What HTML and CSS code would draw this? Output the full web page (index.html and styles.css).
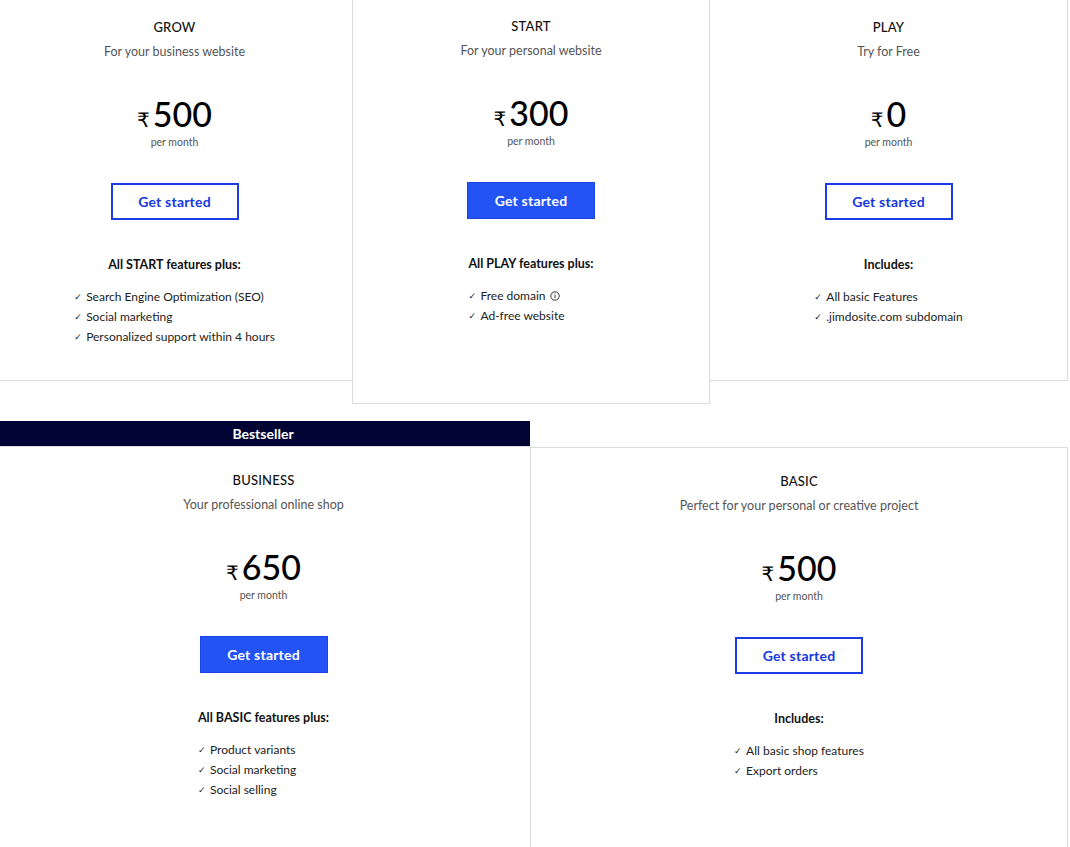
FILE: index.html
```html
<!DOCTYPE html>
<html lang="en">
<head>
<meta charset="utf-8">
<title>Plans</title>
<link rel="stylesheet" href="styles.css">
</head>
<body>
<div class="page">
  <div class="row row-top">
    <section class="card card-grow">
      <h2 class="plan">GROW</h2>
      <p class="tagline">For your business website</p>
      <div class="price"><span class="cur">₹</span><span class="amt">500</span></div>
      <p class="period">per month</p>
      <a class="btn btn-outline" href="#">Get started</a>
      <div class="features">
        <h3 class="feat-head">All START features plus:</h3>
        <ul class="feats">
          <li><span class="tick">✓</span>Search Engine Optimization (SEO)</li>
          <li><span class="tick">✓</span>Social marketing</li>
          <li><span class="tick">✓</span>Personalized support within 4 hours</li>
        </ul>
      </div>
    </section>
    <section class="card card-featured">
      <h2 class="plan">START</h2>
      <p class="tagline">For your personal website</p>
      <div class="price"><span class="cur">₹</span><span class="amt">300</span></div>
      <p class="period">per month</p>
      <a class="btn btn-solid" href="#">Get started</a>
      <div class="features">
        <h3 class="feat-head">All PLAY features plus:</h3>
        <ul class="feats">
          <li><span class="tick">✓</span>Free domain <svg class="info" viewBox="0 0 10 10" width="10" height="10"><circle cx="5" cy="5" r="4.2" fill="none" stroke="#222" stroke-width="0.9"/><rect x="4.55" y="4.2" width="0.9" height="3" fill="#222"/><rect x="4.55" y="2.6" width="0.9" height="0.9" fill="#222"/></svg></li>
          <li><span class="tick">✓</span>Ad-free website</li>
        </ul>
      </div>
    </section>
    <section class="card card-play">
      <h2 class="plan">PLAY</h2>
      <p class="tagline">Try for Free</p>
      <div class="price"><span class="cur">₹</span><span class="amt">0</span></div>
      <p class="period">per month</p>
      <a class="btn btn-outline" href="#">Get started</a>
      <div class="features">
        <h3 class="feat-head">Includes:</h3>
        <ul class="feats">
          <li><span class="tick">✓</span>All basic Features</li>
          <li><span class="tick">✓</span>.jimdosite.com subdomain</li>
        </ul>
      </div>
    </section>
  </div>

  <div class="row row-bottom">
    <div class="col-business">
      <div class="badge">Bestseller</div>
      <section class="card card-wide card-business">
        <h2 class="plan">BUSINESS</h2>
        <p class="tagline">Your professional online shop</p>
        <div class="price"><span class="cur">₹</span><span class="amt">650</span></div>
        <p class="period">per month</p>
        <a class="btn btn-solid" href="#">Get started</a>
        <div class="features">
          <h3 class="feat-head">All BASIC features plus:</h3>
          <ul class="feats">
            <li><span class="tick">✓</span>Product variants</li>
            <li><span class="tick">✓</span>Social marketing</li>
            <li><span class="tick">✓</span>Social selling</li>
          </ul>
        </div>
      </section>
    </div>
    <section class="card card-wide card-basic">
      <h2 class="plan">BASIC</h2>
      <p class="tagline">Perfect for your personal or creative project</p>
      <div class="price"><span class="cur">₹</span><span class="amt">500</span></div>
      <p class="period">per month</p>
      <a class="btn btn-outline" href="#">Get started</a>
      <div class="features">
        <h3 class="feat-head">Includes:</h3>
        <ul class="feats">
          <li><span class="tick">✓</span>All basic shop features</li>
          <li><span class="tick">✓</span>Export orders</li>
        </ul>
      </div>
    </section>
  </div>
</div>
</body>
</html>
```

FILE: styles.css
```css
* { box-sizing: border-box; }
html, body { margin: 0; padding: 0; background: #fff; overflow: hidden; }
body {
  font-family: "Lato", "DejaVu Sans", sans-serif;
  color: #1a1a1a;
  -webkit-font-smoothing: antialiased;
}
.page {
  width: 1072px;
  margin: -6px 0 0 -4px;
}
.row { display: flex; align-items: flex-start; }

.card {
  background: #fff;
  border: 1px solid #dcdcdc;
  display: flex;
  flex-direction: column;
  align-items: center;
  text-align: center;
  padding: 24px 20px 30px;
}
.card-grow { width: 357px; min-height: 387px; }
.card-play { width: 359px; min-height: 387px; margin-left: -1px; }
.card-featured {
  width: 358px;
  min-height: 411px;
  margin-top: -1px;
  margin-left: -1px;
  position: relative;
  z-index: 1;
}

.plan {
  margin: 0;
  font-size: 13px;
  line-height: 16px;
  font-weight: 500;
  letter-spacing: 0.2px;
  color: #111;
}
.tagline {
  margin: 8px 0 0;
  font-size: 12.5px;
  line-height: 18px;
  color: #555;
}
.price {
  margin-top: 35px;
  display: flex;
  align-items: baseline;
  height: 36px;
  line-height: 36px;
  color: #000;
}
.cur {
  font-family: "DejaVu Sans", sans-serif;
  font-size: 20px;
  margin-right: 3px;
}
.amt {
  font-size: 34px;
  font-weight: 500;
}
.period {
  margin: 4px 0 0;
  font-size: 10.5px;
  line-height: 12px;
  color: #555;
}
.btn {
  margin-top: 35px;
  width: 128px;
  height: 37px;
  display: flex;
  align-items: center;
  justify-content: center;
  font-size: 14px;
  font-weight: 700;
  text-decoration: none;
  letter-spacing: 0.2px;
}
.btn-outline {
  border: 2px solid #1b3be6;
  color: #1538e0;
  background: #fff;
}
.btn-solid {
  border: 1px solid #1a45e0;
  background: #2453f5;
  color: #fff;
}
.features {
  margin-top: 37px;
  display: flex;
  flex-direction: column;
  align-items: center;
}
.feat-head {
  margin: 0;
  font-size: 12.5px;
  line-height: 16px;
  font-weight: 700;
  color: #111;
}
.feats {
  align-self: flex-start;
  list-style: none;
  margin: 14px 0 0;
  padding: 0;
  text-align: left;
}
.feats li {
  font-size: 12px;
  line-height: 20px;
  color: #222;
  display: flex;
  align-items: center;
}
.tick {
  font-family: "DejaVu Sans", sans-serif;
  font-size: 9px;
  font-weight: 700;
  width: 12px;
  color: #222;
}
.info { margin-left: 4px; }

.row-bottom { margin-top: 17px; }
.col-business { width: 535px; }
.badge {
  width: 534px;
  height: 25px;
  background: #020533;
  color: #fff;
  font-size: 14px;
  font-weight: 700;
  line-height: 25px;
  text-align: center;
}
.card-wide { padding-top: 25px; min-height: 420px; }
.card-business { width: 535px; }
.card-basic { width: 538px; margin-left: -1px; margin-top: 26px; }
```
